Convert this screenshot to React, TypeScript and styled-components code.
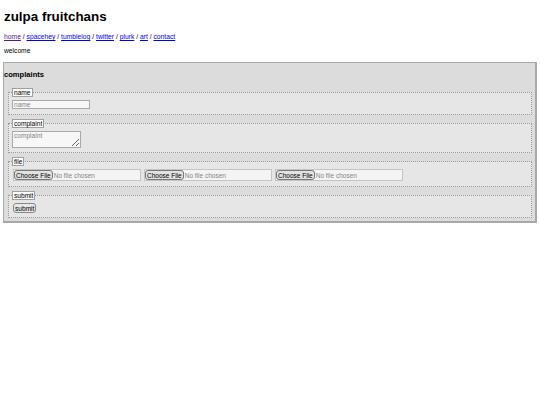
import React from "react";
import styled, { createGlobalStyle } from "styled-components";

const Global = createGlobalStyle`
  html, body { margin: 0; padding: 0; background: #fff; }
  body { font-family: "Liberation Sans", Arial, sans-serif; color: #000; }
`;

const Page = styled.div`
  padding: 0 3px;
  width: 534px;
`;

const Title = styled.h1`
  margin: 9px 0 0 1px;
  font-size: 13.4px;
  line-height: 16px;
  font-weight: bold;
`;

const Nav = styled.nav`
  margin: 8px 0 0 1px;
  font-size: 6.75px;
  line-height: 8px;
`;

const NavLink = styled.a<{ $visited?: boolean }>`
  color: ${(p) => (p.$visited ? "#551a8b" : "#0000ee")};
  text-decoration: underline;
`;

const Welcome = styled.p`
  margin: 6px 0 0 1px;
  font-size: 6.7px;
  line-height: 8px;
`;

const Box = styled.section`
  margin-top: 7px;
  background: #dcdcdc;
  border: 1px solid #a8a8a8;
  border-right-width: 2px;
  border-bottom-width: 2px;
  padding-bottom: 3px;
`;

const Heading = styled.h2`
  margin: 7px 0 0 0;
  font-size: 7.6px;
  line-height: 9px;
  font-weight: bold;
`;

const Set = styled.fieldset<{ $first?: boolean; $padBottom?: number }>`
  margin: ${(p) => (p.$first ? "9px" : "4px")} 3px 0 4px;
  padding: 3px 3px ${(p) => p.$padBottom ?? 4}px 3px;
  border: 1px dotted #9a9a9a;
  background: #e6e6e6;
  min-width: 0;
`;

const Legend = styled.legend`
  background: #fff;
  border: 1px solid #a0a0a0;
  padding: 0 1px;
  font-size: 6.6px;
  line-height: 7px;
  margin-left: 0;
`;

const TextInput = styled.input`
  display: block;
  box-sizing: border-box;
  width: 78px;
  height: 9px;
  margin: 0;
  padding: 0 1px;
  border: 1px solid #a9a9a9;
  background: #f7f7f7;
  font-family: inherit;
  font-size: 6.6px;
  outline: none;
  &::placeholder { color: #858585; }
`;

const TextArea = styled.textarea`
  display: block;
  box-sizing: border-box;
  width: 69px;
  height: 17px;
  margin: 0;
  padding: 0 1px;
  border: 1px solid #a9a9a9;
  background: #f7f7f7;
  font-family: inherit;
  font-size: 6.6px;
  line-height: 8px;
  outline: none;
  &::placeholder { color: #858585; }
`;

const FileRow = styled.div`
  display: flex;
  gap: 3px;
  margin-left: 1px;
`;

const FileBox = styled.label`
  box-sizing: border-box;
  display: flex;
  align-items: center;
  width: 128px;
  height: 12px;
  border: 1px solid #c4c4c4;
  background: #f4f4f4;
  font-size: 6.5px;
`;

const FileButton = styled.span`
  box-sizing: border-box;
  display: inline-flex;
  align-items: center;
  height: 10px;
  padding: 0 1px;
  border: 1px solid #777;
  border-radius: 3px;
  background: #e2e2e2;
  color: #000;
`;

const FileText = styled.span`
  color: #858585;
  margin-left: 1px;
`;

const SubmitButton = styled.button`
  box-sizing: border-box;
  display: block;
  height: 10px;
  margin-left: 1px;
  padding: 0 1px;
  border: 1px solid #888;
  border-radius: 3px;
  background: #e8e8e8;
  font-family: inherit;
  font-size: 6.6px;
  line-height: 7px;
  color: #000;
`;

const links = ["home", "spacehey", "tumblelog", "twitter", "plurk", "art", "contact"];

function FileInput() {
  return (
    <FileBox>
      <FileButton>Choose File</FileButton>
      <FileText>No file chosen</FileText>
    </FileBox>
  );
}

export default function App() {
  return (
    <Page>
      <Global />
      <Title>zulpa fruitchans</Title>
      <Nav>
        {links.map((l, i) => (
          <React.Fragment key={l}>
            {i > 0 && " / "}
            <NavLink href="#" $visited={i === 0}>{l}</NavLink>
          </React.Fragment>
        ))}
      </Nav>
      <Welcome>welcome</Welcome>
      <Box>
        <Heading>complaints</Heading>
        <Set $first $padBottom={5}>
          <Legend>name</Legend>
          <TextInput placeholder="name" />
        </Set>
        <Set>
          <Legend>complaint</Legend>
          <TextArea placeholder="complaint" />
        </Set>
        <Set $padBottom={5}>
          <Legend>file</Legend>
          <FileRow>
            <FileInput />
            <FileInput />
            <FileInput />
          </FileRow>
        </Set>
        <Set>
          <Legend>submit</Legend>
          <SubmitButton>submit</SubmitButton>
        </Set>
      </Box>
    </Page>
  );
}
